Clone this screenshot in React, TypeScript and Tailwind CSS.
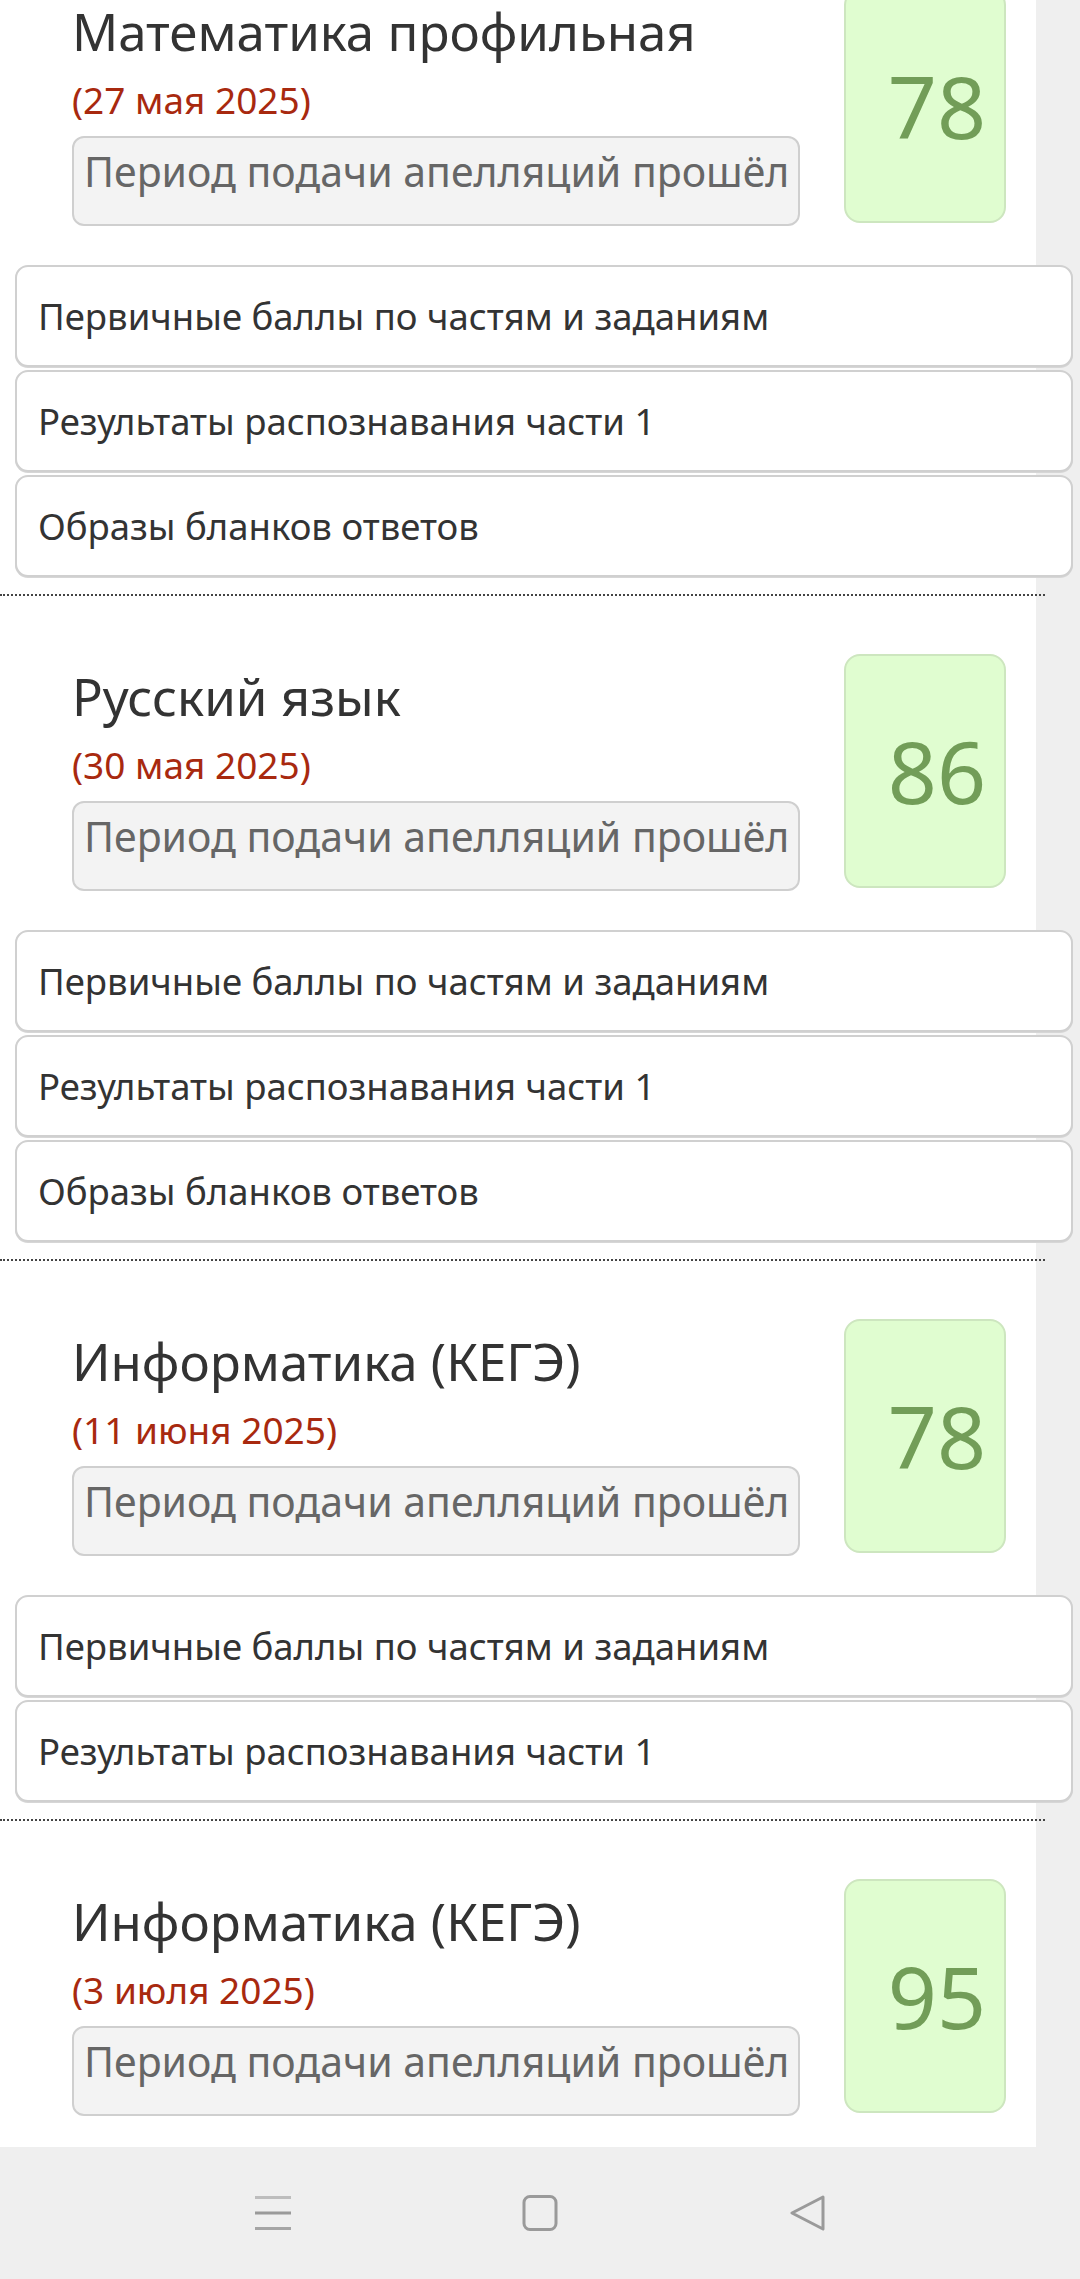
import React from 'react';

// ── Data ──────────────────────────────────────────────────────────

interface Exam {
  title: string;
  date: string;
  score: number;
  links: string[];
}

const LINKS_FULL = [
  'Первичные баллы по частям и заданиям',
  'Результаты распознавания части 1',
  'Образы бланков ответов',
];

const EXAMS: Exam[] = [
  { title: 'Математика профильная', date: '(27 мая 2025)', score: 78, links: LINKS_FULL },
  { title: 'Русский язык', date: '(30 мая 2025)', score: 86, links: LINKS_FULL },
  { title: 'Информатика (КЕГЭ)', date: '(11 июня 2025)', score: 78, links: LINKS_FULL.slice(0, 2) },
  { title: 'Информатика (КЕГЭ)', date: '(3 июля 2025)', score: 95, links: LINKS_FULL.slice(0, 2) },
];

// ── Exam block ────────────────────────────────────────────────────

function ExamBlock({ exam, first }: { exam: Exam; first?: boolean }) {
  return (
    <section className={first ? 'mt-[-69px]' : ''}>
      <div className="flex items-start pt-[58px]">
        <div className="flex flex-col pl-[72px] mt-[8px]">
          <h2 className="text-[51px] leading-[68px] text-[#333] font-normal whitespace-nowrap">{exam.title}</h2>
          <div className="mt-[11px] text-[37px] leading-[48px] text-[#a8290f] whitespace-nowrap">{exam.date}</div>
          <div className="mt-[12px] w-[728px] h-[90px] rounded-[12px] border-2 border-[#cfcfcf] bg-[#f3f3f3] pl-[10px] pt-[7px] text-[41px] leading-[52px] text-[#666] whitespace-nowrap overflow-hidden">
            Период подачи апелляций прошёл
          </div>
        </div>
        <div className="ml-auto mr-[30px] flex h-[234px] w-[162px] shrink-0 items-center justify-center rounded-[16px] border-2 border-[#cde6bf] bg-[#e0fdd0] pl-[24px] text-[86px] leading-none text-[#729d58]">
          {exam.score}
        </div>
      </div>

      <div className="mt-[39px] ml-[15px] flex w-[1058px] flex-col gap-[3px]">
        {exam.links.map((l) => (
          <div
            key={l}
            className="flex h-[102px] items-center rounded-[13px] border-2 border-[#d0d0d0] bg-white pl-[21px] text-[36.5px] text-[#333] shadow-[0_1px_0_#d6d6d6]"
          >
            {l}
          </div>
        ))}
      </div>

      <div className="mt-[17px] w-[1045px] border-t-2 border-dotted border-[#444]" />
    </section>
  );
}

// ── Android nav bar ───────────────────────────────────────────────

function NavBar() {
  return (
    <div className="flex h-[132px] shrink-0 items-center justify-center gap-[227px] bg-[#efefef]">
      <svg width="40" height="36" viewBox="0 0 40 36">
        <rect x="2" y="1" width="36" height="3" fill="#bdbdbd" />
        <rect x="2" y="16.5" width="36" height="3" fill="#9a9a9a" />
        <rect x="2" y="32" width="36" height="3" fill="#a5a5a5" />
      </svg>
      <svg width="40" height="36" viewBox="0 0 40 36">
        <rect x="4" y="1.5" width="32" height="33" rx="6" fill="none" stroke="#9a9a9a" strokeWidth="3" />
      </svg>
      <svg width="40" height="36" viewBox="0 0 40 36">
        <path d="M36 2 L5 18 L36 34 Z" fill="none" stroke="#9a9a9a" strokeWidth="3" strokeLinejoin="round" />
      </svg>
    </div>
  );
}

export default function App() {
  return (
    <div className="flex h-[2279px] w-[1080px] flex-col overflow-hidden bg-[#efefef] font-['Noto_Sans',sans-serif]">
      <div className="h-[2147px] shrink-0 overflow-hidden">
        <div className="flex h-full w-[1036px] flex-col bg-white">
          {EXAMS.map((e, i) => (
            <ExamBlock key={i} exam={e} first={i === 0} />
          ))}
        </div>
      </div>
      <NavBar />
    </div>
  );
}
